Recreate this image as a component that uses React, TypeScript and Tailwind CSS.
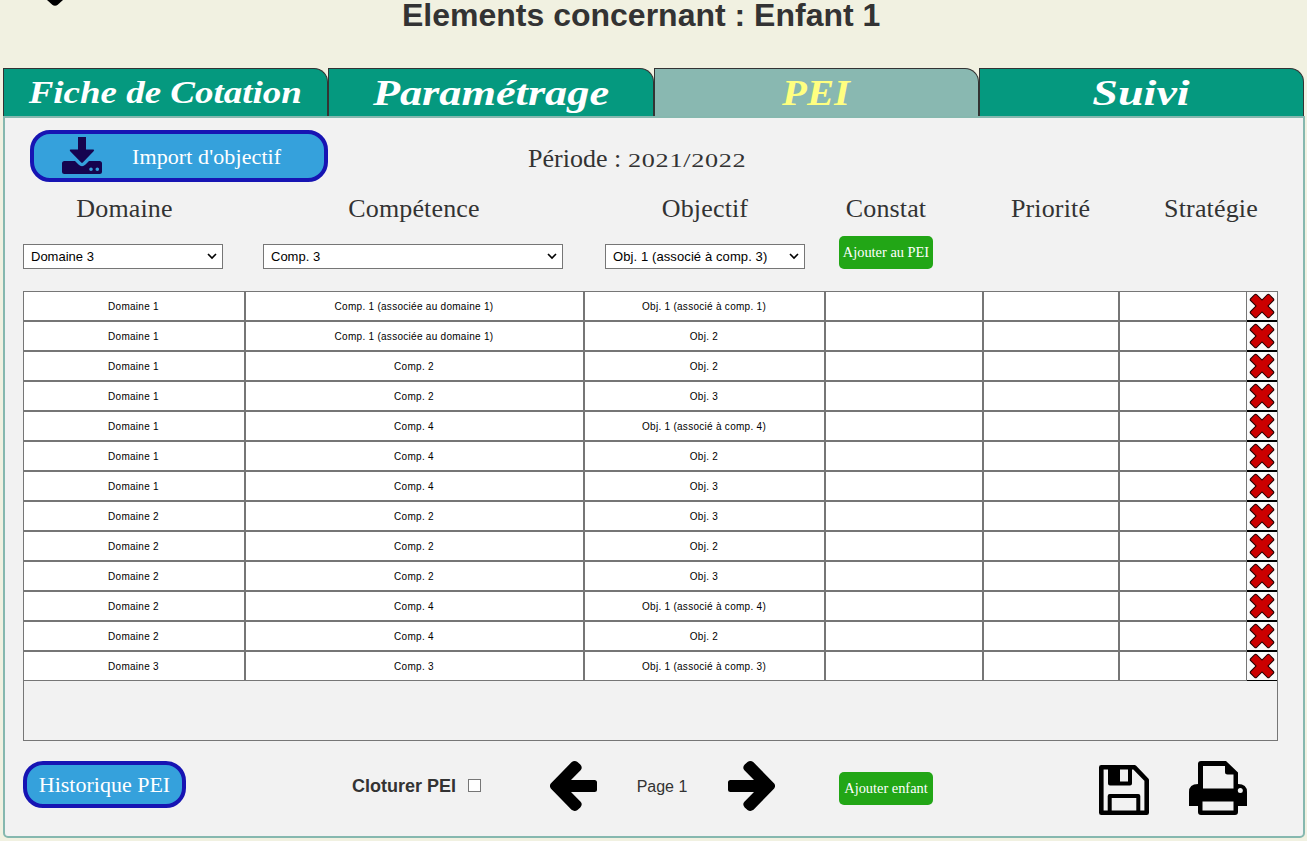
import React from "react";

const SERIF = "font-['Liberation_Serif',serif]";

const tabs = [
  { label: "Fiche de Cotation", active: false, text: "text-[32px] scale-x-[1.155] -translate-y-px" },
  { label: "Paramétrage", active: false, text: "text-[36px] scale-x-[1.23]" },
  { label: "PEI", active: true, text: "text-[36px] scale-x-[1.13]" },
  { label: "Suivi", active: false, text: "text-[36px] scale-x-[1.28]" },
];

const headings = ["Domaine", "Compétence", "Objectif", "Constat", "Priorité", "Stratégie"];

const rows: [string, string, string][] = [
  ["Domaine 1", "Comp. 1 (associée au domaine 1)", "Obj. 1 (associé à comp. 1)"],
  ["Domaine 1", "Comp. 1 (associée au domaine 1)", "Obj. 2"],
  ["Domaine 1", "Comp. 2", "Obj. 2"],
  ["Domaine 1", "Comp. 2", "Obj. 3"],
  ["Domaine 1", "Comp. 4", "Obj. 1 (associé à comp. 4)"],
  ["Domaine 1", "Comp. 4", "Obj. 2"],
  ["Domaine 1", "Comp. 4", "Obj. 3"],
  ["Domaine 2", "Comp. 2", "Obj. 3"],
  ["Domaine 2", "Comp. 2", "Obj. 2"],
  ["Domaine 2", "Comp. 2", "Obj. 3"],
  ["Domaine 2", "Comp. 4", "Obj. 1 (associé à comp. 4)"],
  ["Domaine 2", "Comp. 4", "Obj. 2"],
  ["Domaine 3", "Comp. 3", "Obj. 1 (associé à comp. 3)"],
];

function DownloadIcon() {
  return (
    <svg className="-mt-px" width="40" height="37" viewBox="0 0 40 37" fill="#15044f">
      <path d="M16 0h8v12.500h7.300q1.600 0.300 0.300 1.800L20.800 25.600q-0.800 0.700-1.600 0L8.200 14.300q-1.200-1.500 0.300-1.800H16z" />
      <path
        fillRule="evenodd"
        d="M2.500 24H13l3.500 3.600q3.500 3.200 7 0L27 24h10.500q2.500 0 2.500 2.500v8q0 2.500-2.500 2.500h-35Q0 37 0 34.500v-8Q0 24 2.500 24zM29 30.500a1.800 1.800 0 1 0 0 3.600a1.800 1.800 0 1 0 0-3.600zM35.300 30.500a1.800 1.800 0 1 0 0 3.600a1.800 1.800 0 1 0 0-3.600z"
      />
    </svg>
  );
}

function ArrowIcon({ flip = false }: { flip?: boolean }) {
  return (
    <svg width="47" height="50" viewBox="0 0 47 50" className={flip ? "-scale-x-100" : ""}>
      <path d="M21.500 1.200Q24.500-1 27.500 1L30.300 3.600Q33 6.500 30.600 9.300L21 19H44.500Q47 19 47 21.500V28.500Q47 31 44.500 31H21L30.600 40.700Q33 43.500 30.300 46.400L27.500 49Q24.500 51 21.500 48.800L0.800 27.500Q-1 25 0.800 22.500z" />
    </svg>
  );
}

function SaveIcon() {
  return (
    <svg width="50" height="50" viewBox="0 0 50 50" fill="none" stroke="#000" strokeWidth="4.600" strokeLinejoin="round">
      <path d="M2.300 2.300H35.500L47.700 15V47.700H2.300z" />
      <path d="M11 2V18.500H31V2M10.700 48V31H39.300V48" strokeWidth="4" />
      <path d="M11 2H21V19H11z" fill="#000" stroke="none" />
    </svg>
  );
}

function PrintIcon() {
  return (
    <svg width="58" height="54" viewBox="0 0 58 54">
      <path d="M9 23V3Q9 0 12 0H37L49 11.500V23Q58 23 58 31V45H49V51Q49 54 46 54H12Q9 54 9 51V45H0V31Q0 23 9 23z" />
      <path d="M14 5H36V11Q36 13.500 38.500 13.500H44.500V27.500H14zM13.500 40.500H44.500V49.500H13.500z" fill="#f2f2f2" />
      <circle cx="51.300" cy="29.500" r="2.500" fill="#f2f2f2" />
    </svg>
  );
}

function DeleteIcon() {
  return (
    <svg className="-mt-px -ml-px" width="26" height="26" viewBox="-13 -13 26 26">
      <g fill="#200000">
        <rect x="-13.700" y="-4.700" width="27.400" height="9.400" rx="1.800" transform="rotate(45)" />
        <rect x="-13.700" y="-4.700" width="27.400" height="9.400" rx="1.800" transform="rotate(-45)" />
      </g>
      <g fill="#cc0000">
        <rect x="-12.700" y="-3.700" width="25.400" height="7.400" rx="1" transform="rotate(45)" />
        <rect x="-12.700" y="-3.700" width="25.400" height="7.400" rx="1" transform="rotate(-45)" />
      </g>
    </svg>
  );
}

function Select({ value, className }: { value: string; className: string }) {
  return (
    <div className={`flex h-[25px] items-center justify-between border border-[#767676] bg-white pr-[5px] pl-[7px] text-[13px] text-black ${className}`}>
      <span>{value}</span>
      <svg width="10" height="7" viewBox="0 0 10 7" fill="none" stroke="#000" strokeWidth="1.600">
        <path d="M1 1l4 4l4-4" />
      </svg>
    </div>
  );
}

function GreenButton({ label, className }: { label: string; className: string }) {
  return (
    <button className={`h-[33px] w-[94px] rounded-[5px] bg-[#22a616] whitespace-nowrap text-white ${SERIF} ${className}`}>
      {label}
    </button>
  );
}

export default function App() {
  return (
    <div className="h-[841px] w-[1307px] overflow-hidden bg-[#f1f1e1] font-['Liberation_Sans',sans-serif] text-[#333]">
      <header className="flex h-[68px] items-start">
        <svg className="ml-[47px]" width="16" height="6" viewBox="0 0 16 6">
          <path d="M0 0H16L11 4.500Q8 7 5 4.500z" />
        </svg>
        <h1 className="ml-[339px] text-[32px] leading-[30px] font-bold whitespace-nowrap">Elements concernant : Enfant 1</h1>
      </header>

      <nav className="ml-[3px] flex h-[48px] w-[1301px]">
        {tabs.map((t) => (
          <div
            key={t.label}
            className={`flex flex-1 items-center justify-center rounded-tr-[14px] border border-b-0 border-[#333] ${
              t.active ? "bg-[#89b8b1] text-[#ffff80]" : "bg-[#05997f] text-white"
            }`}
          >
            <span className={`inline-block leading-[40px] font-bold whitespace-nowrap italic ${SERIF} ${t.text}`}>{t.label}</span>
          </div>
        ))}
      </nav>

      <main className="ml-[3px] h-[722px] w-[1302px] rounded-b-[5px] border-2 border-[#86b8af] bg-[#f2f2f2]">
        <div className="flex h-[64px] items-start pt-[12px]">
          <button className="ml-[25px] flex h-[52px] w-[298px] items-center rounded-[20px] border-4 border-[#1714b3] bg-[#35a1dc] pl-[28px]">
            <DownloadIcon />
            <span className={`ml-[30px] text-[22px] tracking-[0.1px] text-white ${SERIF}`}>Import d'objectif</span>
          </button>
          <p className={`ml-[200px] flex h-[56px] items-baseline pt-[14px] text-[26px] leading-[30px] whitespace-pre ${SERIF}`}>
            Période : <span className="inline-block origin-left scale-x-[1.38] text-[19px] tracking-[0.5px]">2021/2022</span>
          </p>
        </div>

        <div className={`grid h-[54px] grid-cols-[239px_340px_242px_120px_209px_112px] pt-[11px] text-center text-[26px] leading-[32px] tracking-[0.150px] ${SERIF}`}>
          {headings.map((h) => (
            <span key={h}>{h}</span>
          ))}
        </div>

        <div className="flex h-[33px] items-end pl-[18px]">
          <Select value="Domaine 3" className="w-[200px]" />
          <Select value="Comp. 3" className="ml-[40px] w-[300px]" />
          <Select value="Obj. 1 (associé à comp. 3)" className="ml-[42px] w-[200px] tracking-[0.1px]" />
          <GreenButton label="Ajouter au PEI" className="ml-[34px] text-[14.4px]" />
        </div>

        <section className="mt-[22px] ml-[18px] w-[1255px] text-[10px] tracking-[0.28px] text-black">
          {rows.map((row, i) => (
            <div key={i} className="grid h-[30px] grid-cols-[222px_339px_241px_158px_136px_128px_31px]">
              {[...row, "", "", ""].map((cell, j) => (
                <div key={j} className="flex items-center justify-center border border-[#767676] bg-white pr-px whitespace-nowrap">
                  {cell}
                </div>
              ))}
              <div className="flex border-r border-[#767676] bg-[#fafafa]">
                <div className={`flex flex-1 items-center justify-center border-y border-black ${i === 0 ? "border-t-[#767676]" : ""}`}>
                  <DeleteIcon />
                </div>
              </div>
            </div>
          ))}
          <div className="h-[60px] border border-t-0 border-[#767676]" />
        </section>

        <footer className="flex items-start pt-[20px] pl-[18px]">
          <button className={`h-[47px] w-[163px] rounded-[20px] border-4 border-[#1714b3] bg-[#35a1dc] text-[22px] leading-[38px] whitespace-nowrap text-white ${SERIF}`}>
            Historique PEI
          </button>
          <label className="mt-[12px] ml-[166px] flex w-[129px] items-center text-[18px] leading-[26px] font-bold whitespace-nowrap">
            Cloturer PEI
            <span className="mb-px ml-auto h-[13px] w-[13px] border border-[#767676] bg-white" />
          </label>
          <div className="ml-[69px] flex items-center">
            <ArrowIcon />
            <span className="w-[131px] pt-px pr-px text-center text-[16px]">Page 1</span>
            <ArrowIcon flip />
          </div>
          <GreenButton label="Ajouter enfant" className="mt-[11px] ml-[64px] text-[14.4px]" />
          <div className="mt-[4px] ml-[166px]">
            <SaveIcon />
          </div>
          <div className="ml-[40px]">
            <PrintIcon />
          </div>
        </footer>
      </main>
    </div>
  );
}
